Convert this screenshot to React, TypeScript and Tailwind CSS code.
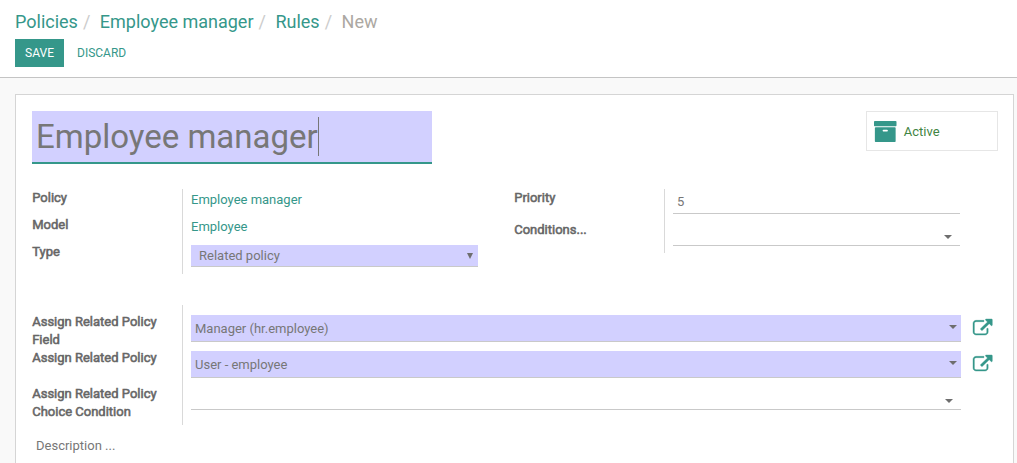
import type { ReactNode } from 'react';

function ArchiveIcon() {
  return (
    <svg viewBox="64 128 1664 1536" className="mt-px h-[21px] w-[22.5px] shrink-0" fill="#35978a" preserveAspectRatio="none">
      <path d="M1088 832q0-26-19-45t-45-19h-256q-26 0-45 19t-19 45 19 45 45 19h256q26 0 45-19t19-45zm576-192v960q0 26-19 45t-45 19h-1408q-26 0-45-19t-19-45v-960q0-26 19-45t45-19h1408q26 0 45 19t19 45zm64-448v256q0 26-19 45t-45 19h-1536q-26 0-45-19t-19-45v-256q0-26 19-45t45-19h1536q26 0 45 19t19 45z" />
    </svg>
  );
}

function ExternalLinkIcon() {
  return (
    <svg viewBox="0 0 1792 1536" className="h-4 w-[19.3px] overflow-visible" fill="#35978a" stroke="#35978a" strokeWidth="36" preserveAspectRatio="none">
      <path d="M1408 928v320q0 119-84.5 203.5t-203.5 84.5h-832q-119 0-203.5-84.5t-84.5-203.5v-832q0-119 84.5-203.5t203.5-84.5h704q14 0 23 9t9 23v64q0 14-9 23t-23 9h-704q-66 0-113 47t-47 113v832q0 66 47 113t113 47h832q66 0 113-47t47-113v-320q0-14 9-23t23-9h64q14 0 23 9t9 23zm384-864v512q0 26-19 45t-45 19-45-19l-176-176-652 652q-10 10-23 10t-23-10l-114-114q-10-10-10-23t10-23l652-652-176-176q-19-19-19-45t19-45 45-19h512q26 0 45 19t19 45z" />
    </svg>
  );
}

function Caret() {
  return (
    <svg viewBox="0 0 8 4" className="h-1 w-2 shrink-0" fill="#6e6e6e">
      <path d="M0 0h8L4 4z" />
    </svg>
  );
}

function Label({ children, className }: { children: ReactNode; className: string }) {
  return (
    <div className={`pl-[0.2px] leading-[18px] text-[#666] [-webkit-text-stroke:0.55px_#666] ${className}`}>{children}</div>
  );
}

function RelationField({ value, className }: { value: string; className: string }) {
  return (
    <div className={`flex h-[27px] items-start justify-between border-b border-[#c9c9c9] bg-[#d2d0ff] px-1 ${className}`}>
      <span className="pt-1 leading-[19px]">{value}</span>
      <span className="flex pt-[10px]">
        <Caret />
      </span>
    </div>
  );
}

function Separator() {
  return <span className="pl-[5px] text-[#ccc]">/</span>;
}

export default function App() {
  return (
    <div className="flex h-[463px] w-[1017px] flex-col overflow-hidden bg-[#f9f9f9] font-[Roboto,sans-serif] text-[13px] text-[#777]">
      <header className="h-[78px] shrink-0 border-b border-[#c4c4c4] bg-white pl-[15px] pt-[9px]">
        <nav className="flex h-[26px] items-center whitespace-nowrap text-[18px] leading-[26px] text-[#35978a]">
          <a>Policies</a>
          <Separator />
          <a className="pl-[9.5px]">Employee manager</a>
          <Separator />
          <a className="pl-[9.5px]">Rules</a>
          <Separator />
          <span className="pl-[9.5px] text-[#aca8a2]">New</span>
        </nav>
        <div className="mt-1 flex h-7 text-[12px] leading-7">
          <button className="w-[49px] bg-[#35978a] text-white">SAVE</button>
          <button className="ml-[13px] text-[#35978a]">DISCARD</button>
        </div>
      </header>

      <main className="ml-[15px] mt-4 h-[400px] w-[999px] shrink-0 border border-[#d5d5d5] bg-white px-4 pt-4">
        <div className="flex h-[53px] w-[966px] items-start justify-between">
          <div className="flex h-[53px] w-[400px] items-start border-b-2 border-[#35978a] bg-[#d2d0ff] pl-1">
            <span className="whitespace-nowrap text-[33px] leading-[51px]">Employee manager</span>
            <span className="mt-[6px] h-[39px] w-px bg-[#777]" />
          </div>
          <button className="flex h-10 w-[132px] items-center border border-[#e6e6e6] pl-[7.3px] text-[#3f8543]">
            <ArchiveIcon />
            <span className="ml-[7px] pt-0.5">Active</span>
          </button>
        </div>

        <div className="mt-[25px] flex items-start">
          <div className="w-[150px]">
            <Label className="h-[27px]">Policy</Label>
            <Label className="h-[27px]">Model</Label>
            <Label className="h-[27px]">Type</Label>
          </div>
          <div className="h-[85px] w-[296px] border-l border-[#d9d9d9] pl-2 text-[#35978a]">
            <div className="h-[27px] pt-0.5 leading-[18px]">Employee manager</div>
            <div className="h-[27px] pt-0.5 leading-[18px]">Employee</div>
            <div className="mt-0.5 flex h-[22px] items-center justify-between border-b border-[#c9c9c9] bg-[#d2d0ff] pl-2 pr-[5px] leading-[21px] text-[#777]">
              <span>Related policy</span>
              <svg viewBox="0 0 6 6" className="h-1.5 w-1.5" fill="#6e6e6e">
                <path d="M0 0h6L3 6z" />
              </svg>
            </div>
          </div>
          <div className="ml-9 w-[150px]">
            <Label className="h-8">Priority</Label>
            <Label className="h-8">Conditions...</Label>
          </div>
          <div className="h-16 w-[296px] border-l border-[#d9d9d9] pl-2">
            <div className="h-[25px] border-b border-[#c9c9c9] pl-1 pt-1 leading-[18px]">5</div>
            <div className="flex h-8 items-end justify-end border-b border-[#c9c9c9] pb-[6px] pr-2">
              <Caret />
            </div>
          </div>
        </div>

        <div className="mt-[31px] flex items-start">
          <div className="w-[150px] pt-2">
            <Label className="h-9 w-[140px]">Assign Related Policy Field</Label>
            <Label className="h-9 w-[140px]">Assign Related Policy</Label>
            <Label className="h-9 w-[140px]">Assign Related Policy Choice Condition</Label>
          </div>
          <div className="h-[120px] w-[779px] border-l border-[#d9d9d9] pl-2 pt-[10px]">
            <RelationField value="Manager (hr.employee)" className="" />
            <RelationField value="User - employee" className="mt-[9px]" />
            <div className="flex h-8 items-end justify-end border-b border-[#c9c9c9] pb-[6px] pr-2">
              <Caret />
            </div>
          </div>
          <div className="flex flex-col gap-5 pl-3 pt-[14px]">
            <ExternalLinkIcon />
            <ExternalLinkIcon />
          </div>
        </div>

        <div className="mt-3 pl-1 leading-[18px]">Description ...</div>
      </main>
    </div>
  );
}
